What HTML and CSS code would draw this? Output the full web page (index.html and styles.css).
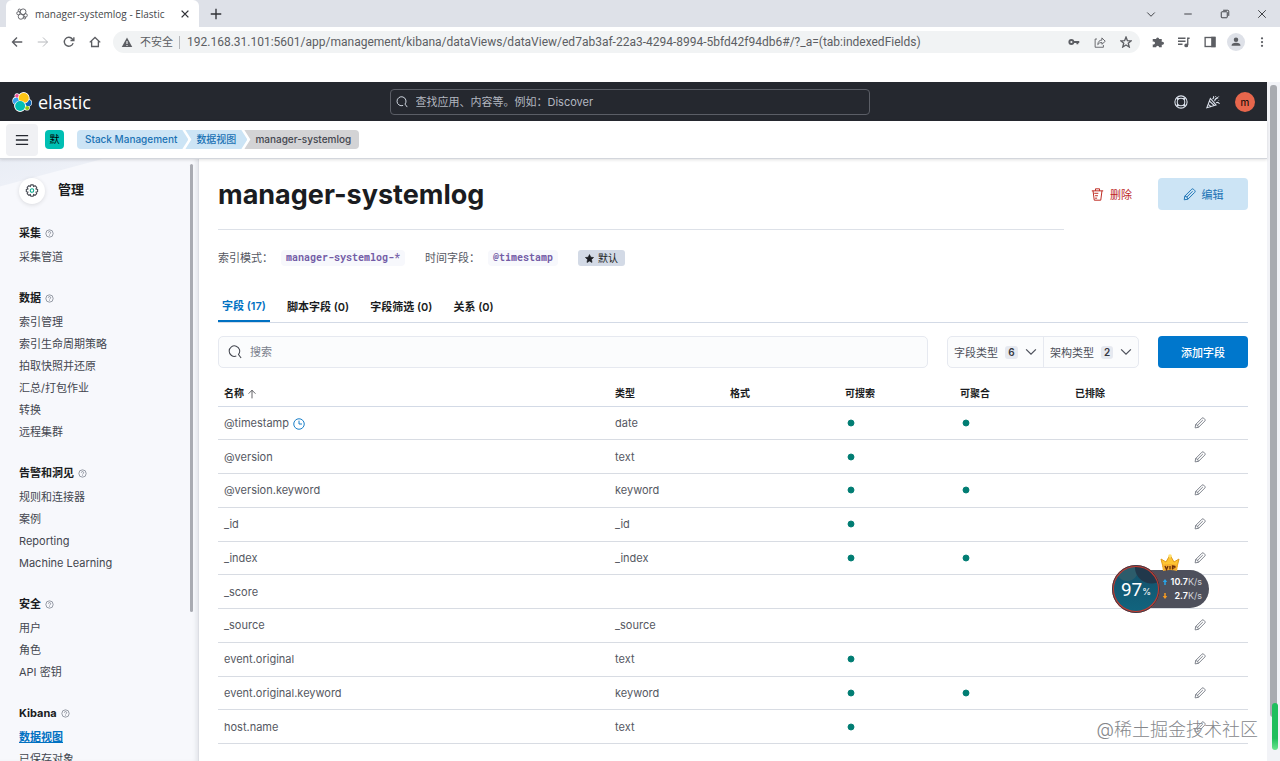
FILE: index.html
```html
<!DOCTYPE html>
<html lang="zh-CN">
<head>
    <meta charset="UTF-8">
    <meta name="viewport" content="width=device-width, initial-scale=1.0">
    <title>manager-systemlog - Elastic</title>
    <link rel="stylesheet" href="styles.css">
</head>
<body>
    <svg class="defs" aria-hidden="true">
        <symbol id="pencil" viewBox="0 0 16 16"><path d="M1.500 14.500l.7-4.500L10.600 1.600a1.700 1.700 0 0 1 2.400 0l1.400 1.400a1.700 1.700 0 0 1 0 2.400L6 13.800zM2.200 10Q5.500 10 6 13.800M4.600 11.200l7.200-7.200"/></symbol>
        <symbol id="search" viewBox="0 0 16 16"><path d="M9.500 12.600A6 6 0 1 1 12 10.800l3 4"/></symbol>
        <symbol id="chevron" viewBox="0 0 16 16"><path d="M1.500 4.500L8 11l6.500-6.500"/></symbol>
        <symbol id="help" viewBox="0 0 16 16"><circle cx="8" cy="8" r="6.500"/><path d="M6 6.500a2 2 0 1 1 2.500 2q-.5.2-.5 1M8 11v1.200"/></symbol>
        <symbol id="dot" viewBox="0 0 16 16"><circle cx="8" cy="8" r="4"/></symbol>
    </svg>

    <div class="tabstrip">
        <div class="tab">
            <svg class="icon" viewBox="0 0 16 16"><circle cx="9.500" cy="5" r="3.800"/><circle cx="6.500" cy="11.500" r="3.500"/><circle cx="3.200" cy="7" r="2.200"/><circle cx="12.800" cy="9.800" r="2.300"/><circle cx="4.500" cy="3" r="1.600"/><circle cx="11.500" cy="13.200" r="1.400"/></svg>
            <span class="tab-title">manager-systemlog - Elastic</span>
            <button class="plain" aria-label="关闭标签页"><svg class="icon dark bold" viewBox="0 0 16 16"><path d="M3.500 3.500l9 9M12.500 3.500l-9 9"/></svg></button>
        </div>
        <button class="plain new-tab" aria-label="新标签页"><svg class="icon dark bold" viewBox="0 0 16 16"><path d="M8 1v14M1 8h14"/></svg></button>
        <div class="window-buttons">
            <button class="plain" aria-label="搜索标签页"><svg class="icon dark" viewBox="0 0 16 16"><path d="M3 6l5 5 5-5"/></svg></button>
            <button class="plain" aria-label="最小化"><svg class="icon dark" viewBox="0 0 16 16"><path d="M3 8h10"/></svg></button>
            <button class="plain" aria-label="还原"><svg class="icon dark" viewBox="0 0 16 16"><rect x="3" y="5" width="8" height="8" rx="1"/><path d="M5.500 3h6q1.500 0 1.500 1.500v6"/></svg></button>
            <button class="plain" aria-label="关闭"><svg class="icon dark" viewBox="0 0 16 16"><path d="M3 3l10 10M13 3L3 13"/></svg></button>
        </div>
    </div>

    <div class="toolbar">
        <button class="plain" aria-label="后退"><svg class="icon bold" viewBox="0 0 16 16"><path d="M15 8H2M8 2L2 8l6 6"/></svg></button>
        <button class="plain" aria-label="前进"><svg class="icon faded" viewBox="0 0 16 16"><path d="M1 8h13M8 2l6 6-6 6"/></svg></button>
        <button class="plain" aria-label="重新加载"><svg class="icon bold" viewBox="0 0 16 16"><path d="M13.500 9.500A6 6 0 1 1 12.500 4l2 2M14.500 1.500V6H10"/></svg></button>
        <button class="plain" aria-label="主页"><svg class="icon bold" viewBox="0 0 16 16"><path d="M1 8.500L8 2l7 6.500M3.500 7v7h9V7"/></svg></button>
        <div class="address">
            <svg class="icon solid" viewBox="0 0 16 16"><path d="M8 2l7 12.500H1z"/><path class="cutout" d="M8 6.500v4M8 12v1.300"/></svg>
            <span class="insecure">不安全</span>
            <input class="url" type="text" aria-label="地址" value="192.168.31.101:5601/app/management/kibana/dataViews/dataView/ed7ab3af-22a3-4294-8994-5bfd42f94db6#/?_a=(tab:indexedFields)">
            <button class="plain" aria-label="密码"><svg class="icon bold" viewBox="0 0 16 16"><circle class="thick" cx="4.500" cy="8" r="2.700"/><path class="thick" d="M7.500 8H15M12.500 8v3"/></svg></button>
            <button class="plain" aria-label="分享"><svg class="icon" viewBox="0 0 16 16"><path d="M4 4H1.500v11h11v-3M5 11.500q.5-6 5.500-6V2.500L15 7l-4.500 4V8.500Q7 8.500 5 11.500z"/></svg></button>
            <button class="plain" aria-label="收藏"><svg class="icon bold" viewBox="0 0 16 16"><path d="M8 1.500l1.900 4.700 5 .3-3.900 3.200 1.300 4.900L8 11.900l-4.300 2.700L5 9.700 1.100 6.500l5-.3z"/></svg></button>
        </div>
        <button class="plain" aria-label="扩展程序"><svg class="icon solid" viewBox="0 0 16 16"><path d="M1 4h4.500a2 2 0 1 1 4 0H13v4a2 2 0 1 1 0 3.500V15H9.500a2 2 0 1 0-4 0H1v-4a2 2 0 1 0 0-3.500z"/></svg></button>
        <button class="plain" aria-label="媒体"><svg class="icon bold" viewBox="0 0 16 16"><path d="M0 3h10M0 7h10M0 11h6M15.500 3H13v9"/><circle class="fill" cx="11" cy="12.500" r="1.700"/></svg></button>
        <button class="plain" aria-label="侧边栏"><svg class="icon bold" viewBox="0 0 16 16"><rect x="1.500" y="2" width="13" height="12"/><path class="fill" d="M10.500 2h4v12h-4z"/></svg></button>
        <button class="plain profile" aria-label="个人资料"><svg class="icon solid" viewBox="0 0 16 16"><circle cx="8" cy="5" r="3"/><path d="M2 13q0-4 6-4t6 4z"/></svg></button>
        <button class="plain" aria-label="菜单"><svg class="icon solid" viewBox="0 0 16 16"><circle cx="8" cy="3" r="1.500"/><circle cx="8" cy="8" r="1.500"/><circle cx="8" cy="13" r="1.500"/></svg></button>
    </div>

    <div class="viewport">
        <div class="page">
            <header class="header">
                <a class="brand" href="#">
                    <svg class="logo" viewBox="0 0 32 32"><circle cx="18.500" cy="10" r="9.500" fill="#fff"/><circle cx="13" cy="22" r="9.500" fill="#fff"/><circle cx="7" cy="14" r="6.500" fill="#fff"/><circle cx="26" cy="17" r="6" fill="#fff"/><circle cx="8" cy="6" r="4" fill="#fff"/><circle cx="24" cy="25" r="4.500" fill="#fff"/><circle cx="8" cy="6" r="3" fill="#f04e98"/><circle cx="7" cy="14.500" r="5.500" fill="#36a2ef"/><circle cx="26" cy="17.500" r="5" fill="#0b64b4"/><circle cx="18.800" cy="9.500" r="9" fill="#fff"/><circle cx="18.800" cy="9.500" r="8" fill="#fec514"/><circle cx="13" cy="22.500" r="9" fill="#fff"/><circle cx="13" cy="22.500" r="8" fill="#00bfb3"/><circle cx="24.300" cy="25.500" r="3.300" fill="#93c90e"/></svg>
                    <span>elastic</span>
                </a>
                <label class="global-search">
                    <svg class="icon" aria-hidden="true"><use href="#search"/></svg>
                    <input type="search" aria-label="查找应用" placeholder="查找应用、内容等。例如：Discover">
                </label>
                <div class="header-actions">
                    <button class="plain" aria-label="帮助"><svg class="icon" viewBox="0 0 16 16"><circle cx="8" cy="8" r="7"/><circle cx="8" cy="8" r="4.300"/><path class="thick" d="M3.500 3.500L5 5M11 5l1.500-1.500M3.500 12.500L5 11M11 11l1.500 1.500"/></svg></button>
                    <button class="plain" aria-label="新闻"><svg class="icon" viewBox="0 0 16 16"><path d="M5 4L1 14.500l10.500-3zM4 7l5.500 5M2.500 10.500l3.500 3M7.500 4.500q2-1 1-3M10 7q0-3 4-4M11.500 9q2-1.500 4 1M11 1.200v.8M14.500 6v.7M14.500 1v.6"/></svg></button>
                    <button class="avatar" aria-label="用户">m</button>
                </div>
            </header>

            <div class="subheader">
                <button class="menu-button" aria-label="切换主导航"><svg class="icon menu-icon" viewBox="0 0 16 16"><path d="M1 3h14M1 8h14M1 13h14"/></svg></button>
                <button class="space">默</button>
                <nav class="breadcrumbs" aria-label="导航">
                    <a href="#">Stack Management</a>
                    <a href="#">数据视图</a>
                    <span>manager-systemlog</span>
                </nav>
            </div>

            <div class="body">
                <aside class="sidebar">
                    <div class="sidebar-content">
                        <div class="sidebar-title">
                            <span class="gear"><svg class="icon" viewBox="0 0 16 16"><path d="M6.700 1h2.600l.5 1.900 1.700-.9 1.900 1.900-.9 1.700 1.900.6v2.600l-1.900.5.9 1.700-1.900 1.900-1.700-.9-.5 1.900H6.700l-.6-1.900-1.700.9L2.500 11l.9-1.700-1.900-.5V6.200l1.900-.6-.9-1.700L4.400 2l1.700.9z"/><circle class="green" cx="8" cy="7.500" r="2"/></svg></span>
                            <h2>管理</h2>
                        </div>
                        <section>
                            <h3>采集 <svg class="icon"><use href="#help"/></svg></h3>
                            <a href="#">采集管道</a>
                        </section>
                        <section>
                            <h3>数据 <svg class="icon"><use href="#help"/></svg></h3>
                            <a href="#">索引管理</a>
                            <a href="#">索引生命周期策略</a>
                            <a href="#">拍取快照并还原</a>
                            <a href="#">汇总/打包作业</a>
                            <a href="#">转换</a>
                            <a href="#">远程集群</a>
                        </section>
                        <section>
                            <h3>告警和洞见 <svg class="icon"><use href="#help"/></svg></h3>
                            <a href="#">规则和连接器</a>
                            <a href="#">案例</a>
                            <a href="#">Reporting</a>
                            <a href="#">Machine Learning</a>
                        </section>
                        <section>
                            <h3>安全 <svg class="icon"><use href="#help"/></svg></h3>
                            <a href="#">用户</a>
                            <a href="#">角色</a>
                            <a href="#">API 密钥</a>
                        </section>
                        <section>
                            <h3>Kibana <svg class="icon"><use href="#help"/></svg></h3>
                            <a class="active" href="#">数据视图</a>
                            <a href="#">已保存对象</a>
                        </section>
                    </div>
                    <div class="sidebar-scroll"></div>
                </aside>

                <main class="content">
                    <div class="title-row">
                        <h1>manager-systemlog</h1>
                        <div class="title-actions">
                            <button class="delete"><svg class="icon" viewBox="0 0 16 16"><path d="M1 3.500h14M5.500 3.500V1h5v2.500M2.500 3.500L4 15h8l1.500-11.500M4 6.500h5M5 9.500h3.500M5 12.500h2.500"/></svg>删除</button>
                            <button class="edit"><svg class="icon"><use href="#pencil"/></svg>编辑</button>
                        </div>
                    </div>

                    <div class="meta">
                        <span>索引模式：</span><code>manager-systemlog-*</code>
                        <span>时间字段：</span><code>@timestamp</code>
                        <span class="badge"><svg class="icon" viewBox="0 0 16 16"><path d="M8 1l2.200 4.700 5 .6-3.700 3.500.9 5.200L8 12.500 3.600 15l.9-5.200L.8 6.300l5-.6z"/></svg>默认</span>
                    </div>

                    <div class="tabs" role="tablist">
                        <button class="selected" role="tab" aria-selected="true">字段 (17)</button>
                        <button role="tab">脚本字段 (0)</button>
                        <button role="tab">字段筛选 (0)</button>
                        <button role="tab">关系 (0)</button>
                    </div>

                    <div class="filters">
                        <label class="field-search">
                            <svg class="icon" aria-hidden="true"><use href="#search"/></svg>
                            <input type="search" aria-label="搜索" placeholder="搜索">
                        </label>
                        <div class="filter-group">
                            <button>字段类型 <span class="count">6</span><svg class="icon"><use href="#chevron"/></svg></button>
                            <button>架构类型 <span class="count">2</span><svg class="icon"><use href="#chevron"/></svg></button>
                        </div>
                        <button class="add">添加字段</button>
                    </div>

                    <table class="fields">
                        <thead>
                            <tr>
                                <th class="name">名称 <svg class="icon dark" viewBox="0 0 16 16"><path d="M8 15V2M2.500 7.500L8 2l5.500 5.500"/></svg></th>
                                <th>类型</th>
                                <th>格式</th>
                                <th>可搜索</th>
                                <th>可聚合</th>
                                <th>已排除</th>
                                <th class="action"></th>
                            </tr>
                        </thead>
                        <tbody>
                            <tr>
                                <td>@timestamp <svg class="icon clock" viewBox="0 0 16 16"><circle cx="8" cy="8" r="7"/><path d="M8 3.500V8h4"/></svg></td><td>date</td><td></td>
                                <td><svg class="icon yes"><use href="#dot"/></svg></td><td><svg class="icon yes"><use href="#dot"/></svg></td><td></td>
                                <td><button class="plain" aria-label="编辑"><svg class="icon"><use href="#pencil"/></svg></button></td>
                            </tr>
                            <tr>
                                <td>@version</td><td>text</td><td></td>
                                <td><svg class="icon yes"><use href="#dot"/></svg></td><td></td><td></td>
                                <td><button class="plain" aria-label="编辑"><svg class="icon"><use href="#pencil"/></svg></button></td>
                            </tr>
                            <tr>
                                <td>@version.keyword</td><td>keyword</td><td></td>
                                <td><svg class="icon yes"><use href="#dot"/></svg></td><td><svg class="icon yes"><use href="#dot"/></svg></td><td></td>
                                <td><button class="plain" aria-label="编辑"><svg class="icon"><use href="#pencil"/></svg></button></td>
                            </tr>
                            <tr>
                                <td>_id</td><td>_id</td><td></td>
                                <td><svg class="icon yes"><use href="#dot"/></svg></td><td></td><td></td>
                                <td><button class="plain" aria-label="编辑"><svg class="icon"><use href="#pencil"/></svg></button></td>
                            </tr>
                            <tr>
                                <td>_index</td><td>_index</td><td></td>
                                <td><svg class="icon yes"><use href="#dot"/></svg></td><td><svg class="icon yes"><use href="#dot"/></svg></td><td></td>
                                <td><button class="plain" aria-label="编辑"><svg class="icon"><use href="#pencil"/></svg></button></td>
                            </tr>
                            <tr>
                                <td>_score</td><td></td><td></td>
                                <td></td><td></td><td></td>
                                <td><button class="plain" aria-label="编辑"><svg class="icon"><use href="#pencil"/></svg></button></td>
                            </tr>
                            <tr>
                                <td>_source</td><td>_source</td><td></td>
                                <td></td><td></td><td></td>
                                <td><button class="plain" aria-label="编辑"><svg class="icon"><use href="#pencil"/></svg></button></td>
                            </tr>
                            <tr>
                                <td>event.original</td><td>text</td><td></td>
                                <td><svg class="icon yes"><use href="#dot"/></svg></td><td></td><td></td>
                                <td><button class="plain" aria-label="编辑"><svg class="icon"><use href="#pencil"/></svg></button></td>
                            </tr>
                            <tr>
                                <td>event.original.keyword</td><td>keyword</td><td></td>
                                <td><svg class="icon yes"><use href="#dot"/></svg></td><td><svg class="icon yes"><use href="#dot"/></svg></td><td></td>
                                <td><button class="plain" aria-label="编辑"><svg class="icon"><use href="#pencil"/></svg></button></td>
                            </tr>
                            <tr>
                                <td>host.name</td><td>text</td><td></td>
                                <td><svg class="icon yes"><use href="#dot"/></svg></td><td></td><td></td>
                                <td><button class="plain" aria-label="编辑"><svg class="icon"><use href="#pencil"/></svg></button></td>
                            </tr>
                        </tbody>
                    </table>
                </main>
            </div>
        </div>
        <div class="page-scroll"><div class="thumb"></div></div>
    </div>

    <div class="monitor">
        <svg class="crown" viewBox="0 0 20 18"><path d="M3 13L1 5l5 3 4-7 4 7 5-3-2 8z" fill="#ffc531" stroke="#e09a1c"/><circle cx="10" cy="2" r="1.800" fill="#ffe071"/><path d="M2 11q8-2 16 0l-1 6q-7-2-14 0z" fill="#f6ae2d"/><path d="M5 12l1.500 3.500L8 12M10 12v3.500M12.500 15.500V12q3 0 2.500 1.300-.5.900-2.500.700" fill="none" stroke="#6b2e0b" stroke-width="1.300"/></svg>
        <div class="usage"><span class="usage-value">97</span><span class="usage-unit">%</span></div>
        <div class="speed">
            <div><svg class="up" viewBox="0 0 8 8"><path d="M4 0l3 4H5v4H3V4H1z"/></svg><b>10.7</b>K/s</div>
            <div><svg class="down" viewBox="0 0 8 8"><path d="M4 8L1 4h2V0h2v4h2z"/></svg><b>2.7</b>K/s</div>
        </div>
    </div>
    <div class="watermark">@稀土掘金技术社区</div>
    <div class="side-marker"></div>
</body>
</html>
```
FILE: styles.css
```css
* {
    margin: 0;
    padding: 0;
    box-sizing: border-box;
}
body {
    height: 100vh;
    display: flex;
    flex-direction: column;
    overflow: hidden;
    position: relative;
    font-family: Inter, "Noto Sans CJK SC", sans-serif;
    font-size: 11px;
    color: #43464f;
    background: #fff;
}
button, input {
    font: inherit;
    color: inherit;
    border: none;
    background: none;
}
button {
    cursor: pointer;
}
input {
    outline: none;
    min-width: 0;
}
a {
    color: inherit;
    text-decoration: none;
}
.defs {
    display: none;
}
.icon {
    width: 12px;
    height: 12px;
    flex: none;
    fill: none;
    stroke: currentColor;
    stroke-width: 1.2;
}
.bold {
    stroke-width: 1.8;
}
.dark {
    color: #303236;
}
.faded {
    color: #aeb0b4;
}
.solid, .fill {
    fill: currentColor;
}
.solid {
    stroke: none;
}
.thick {
    stroke-width: 2.5;
}
.cutout {
    stroke: #f1f3f4;
    stroke-width: 1.5;
}
.plain {
    display: flex;
    align-items: center;
    justify-content: center;
}

/* browser frame */
.tabstrip {
    height: 27px;
    flex: none;
    display: flex;
    align-items: center;
    padding-left: 6px;
    background: #dee1e8;
}
.tab {
    width: 193px;
    height: 27px;
    display: flex;
    align-items: center;
    gap: 7px;
    padding: 0 8px 0 10px;
    background: #fff;
    border-radius: 6px 6px 0 0;
    color: #5c5e63;
}
.tab-title {
    flex: 1;
    font-family: "Open Sans", sans-serif;
    font-size: 10px;
    color: #45474b;
}
.new-tab {
    margin-left: 11px;
}
.window-buttons {
    display: flex;
    gap: 25px;
    margin-left: auto;
    padding-right: 12px;
}
.toolbar {
    height: 30px;
    flex: none;
    display: flex;
    align-items: center;
    gap: 14px;
    padding: 0 12px 0 11px;
    margin-bottom: 25px;
    color: #5c5e63;
}
.address {
    flex: 1;
    height: 22px;
    display: flex;
    align-items: center;
    gap: 14px;
    padding: 0 8px;
    margin: 0 -2px;
    border-radius: 11px;
    background: #f1f3f4;
}
.insecure {
    margin-left: -7px;
    padding-right: 6px;
    border-right: 1px solid #b5b7ba;
    line-height: 13px;
}
.url {
    flex: 1;
    margin-left: -7px;
    font-family: Roboto, sans-serif;
    font-size: 12px;
    color: #5c5e63;
}
.profile {
    width: 18px;
    height: 18px;
    margin: 0 -3px;
    border-radius: 50%;
    background: #dee1e8;
}

/* kibana header */
.viewport {
    flex: 1;
    min-height: 0;
    display: flex;
}
.page {
    flex: 1;
    min-width: 0;
    display: flex;
    flex-direction: column;
}
.page-scroll {
    width: 13px;
    padding: 3px 3px 44px;
    background: #f2f3f7;
}
.thumb {
    height: 100%;
    border-radius: 3px;
    background: #a9abb0;
}
.header {
    height: 39px;
    flex: none;
    display: grid;
    grid-template-columns: 1fr 480px 1fr;
    align-items: center;
    padding: 0 12px;
    background: #25282f;
    color: #dfe5ef;
}
.brand {
    display: flex;
    align-items: center;
    gap: 6px;
    font-family: "Open Sans", sans-serif;
    font-size: 18px;
    line-height: 20px;
    color: #fff;
}
.logo {
    width: 20px;
    height: 20px;
}
.global-search {
    height: 26px;
    display: flex;
    align-items: center;
    gap: 8px;
    padding: 0 5px;
    margin: 0 4px 0 -4px;
    border: 1px solid #5b5e66;
    border-radius: 4px;
}
.global-search input {
    flex: 1;
}
.global-search input::placeholder {
    color: #b3b7c0;
}
.header-actions {
    display: flex;
    justify-content: flex-end;
    align-items: center;
    gap: 18px;
}
.header-actions .icon {
    width: 14px;
    height: 14px;
}
.avatar {
    width: 20px;
    height: 20px;
    margin-left: -3px;
    border-radius: 50%;
    background: #e7664c;
    font-size: 10px;
    color: #000;
}
.subheader {
    height: 38px;
    flex: none;
    display: flex;
    align-items: center;
    padding-left: 6px;
    border-bottom: 1px solid #d3d6dc;
    box-shadow: 0 1px 3px rgba(0, 0, 0, 0.12);
    position: relative;
}
.menu-button {
    width: 32px;
    height: 32px;
    border-radius: 4px;
    background: #f0f1f4;
    display: flex;
    align-items: center;
    justify-content: center;
}
.menu-icon {
    width: 14px;
    height: 14px;
    stroke-width: 1.6;
    color: #25282f;
}
.space {
    width: 19px;
    height: 19px;
    margin: 0 13px 0 7px;
    border-radius: 4px;
    background: #00bfb3;
    font-size: 10px;
    line-height: 19px;
    color: #000;
}
.breadcrumbs {
    display: flex;
    font-size: 10px;
    font-weight: 500;
    line-height: 19px;
}
.breadcrumbs a {
    padding: 0 11px 0 8px;
    border-radius: 4px 0 0 4px;
    background: #cce4f5;
    color: #1a72b4;
    clip-path: polygon(0 0, calc(100% - 6px) 0, 100% 50%, calc(100% - 6px) 100%, 0 100%);
}
.breadcrumbs a + a {
    margin-left: -3px;
    padding-left: 11px;
    border-radius: 0;
    clip-path: polygon(0 0, calc(100% - 6px) 0, 100% 50%, calc(100% - 6px) 100%, 0 100%, 6px 50%);
}
.breadcrumbs span {
    margin-left: -3px;
    padding: 0 8px 0 11px;
    border-radius: 0 4px 4px 0;
    background: #d3d3d5;
    clip-path: polygon(0 0, 100% 0, 100% 100%, 0 100%, 6px 50%);
}

/* sidebar */
.body {
    flex: 1;
    min-height: 0;
    display: flex;
}
.sidebar {
    width: 199px;
    flex: none;
    display: flex;
    justify-content: space-between;
    padding: 5px 5px 0 19px;
    overflow: hidden;
    border-right: 1px solid #dcdee4;
    background: linear-gradient(165deg, #e9edf5 0, #edf0f7 26px, #f7f8fc 27px);
    box-shadow: inset -4px 0 4px -2px #e3e5ea;
}
.sidebar-scroll {
    width: 3px;
    height: 75%;
    border-radius: 2px;
    background: #a9abb2;
}
.sidebar-title {
    display: flex;
    gap: 13px;
    margin: 14px 0 18px;
}
.sidebar-title h2 {
    font-size: 13px;
    line-height: 22px;
    color: #1a1c21;
}
.gear {
    width: 26px;
    height: 26px;
    display: flex;
    align-items: center;
    justify-content: center;
    border-radius: 50%;
    background: #fff;
    box-shadow: 0 1px 4px rgba(0, 0, 0, 0.12);
}
.gear .icon {
    width: 14px;
    height: 14px;
}
.green {
    stroke: #00a68a;
}
.sidebar section {
    margin-bottom: 19px;
}
.sidebar h3 {
    display: flex;
    align-items: center;
    gap: 4px;
    margin-bottom: 2px;
    font-size: 11px;
    line-height: 22px;
    color: #1a1c21;
}
.sidebar h3 .icon {
    width: 9px;
    height: 9px;
    color: #69707d;
}
.sidebar section a {
    display: block;
    line-height: 22px;
}
.sidebar .active {
    font-weight: 700;
    color: #0071c2;
    text-decoration: underline;
}

/* data view */
.content {
    flex: 1;
    min-width: 0;
    padding: 19px 19px 0;
}
.title-row {
    display: flex;
}
.title-row h1 {
    flex: 1;
    height: 52px;
    border-bottom: 1px solid #dde1e8;
    font-size: 27px;
    line-height: 34px;
    color: #1a1c21;
}
.title-actions {
    display: flex;
    align-items: flex-start;
    gap: 16px;
    margin-left: 17px;
}
.title-actions button, .add {
    height: 32px;
    display: flex;
    align-items: center;
    justify-content: center;
    gap: 6px;
    border-radius: 4px;
}
.title-actions .icon {
    width: 13px;
    height: 13px;
}
.title-actions .delete {
    padding: 0 10px;
    color: #bd271e;
}
.title-actions .edit, .add {
    width: 90px;
}
.title-actions .edit {
    background: #cce4f5;
    color: #1a72b4;
}
.meta {
    display: flex;
    align-items: center;
    margin-top: 19px;
    line-height: 18px;
    color: #555862;
}
.meta code {
    margin: 0 20px 0 8px;
    padding: 0 5px;
    border-radius: 4px;
    background: #f7f8fc;
    font-family: "Roboto Mono", "Liberation Mono", monospace;
    font-size: 10px;
    font-weight: 700;
    line-height: 16px;
    color: #735ca6;
}
.badge {
    display: flex;
    align-items: center;
    gap: 4px;
    padding: 0 7px;
    border-radius: 3px;
    background: #d3dae6;
    font-size: 10px;
    line-height: 16px;
    color: #1a1c21;
}
.badge .icon {
    width: 9px;
    height: 9px;
    fill: currentColor;
}
.tabs {
    display: flex;
    gap: 13px;
    margin-top: 23px;
    border-bottom: 1px solid #d3dae6;
}
.tabs button {
    height: 32px;
    padding: 0 4px;
    font-weight: 600;
    color: #1a1c21;
}
.tabs .selected {
    margin-bottom: -1px;
    border-bottom: 2px solid #0071c2;
    color: #0071c2;
}
.filters {
    display: flex;
    gap: 19px;
    margin-top: 13px;
}
.field-search {
    flex: 1;
    height: 32px;
    display: flex;
    align-items: center;
    gap: 8px;
    padding: 0 9px;
    border: 1px solid #e6e9f0;
    border-radius: 5px;
    background: #fbfcfd;
}
.field-search .icon {
    width: 14px;
    height: 14px;
}
.field-search input {
    flex: 1;
}
.field-search input::placeholder {
    color: #7a808c;
}
.filter-group {
    display: flex;
    border: 1px solid #e6e9f0;
    border-radius: 5px;
    background: #fbfcfd;
    color: #4d505a;
}
.filter-group button {
    width: 95px;
    display: flex;
    align-items: center;
    justify-content: space-between;
    padding: 0 6px;
}
.filter-group button + button {
    border-left: 1px solid #e6e9f0;
}
.filter-group .icon {
    stroke-width: 1.6;
}
.count {
    padding: 0 3px;
    border-radius: 3px;
    background: #e6e9f0;
    font-size: 10px;
    font-weight: 600;
    line-height: 13px;
    color: #343741;
}
.add {
    background: #0077cc;
    color: #fff;
    font-weight: 500;
}
.fields {
    width: 100%;
    height: 365px;
    margin-top: 11px;
    table-layout: fixed;
    border-collapse: collapse;
    text-align: left;
    color: #555862;
}
.fields th {
    width: 115px;
    height: 27px;
    padding: 0 6px;
    border-bottom: 1px solid #d3dae6;
    font-size: 10px;
    font-weight: 600;
    color: #1a1c21;
}
.fields .name {
    width: auto;
}
.fields .action {
    width: 64px;
}
.fields td {
    padding: 0 6px;
    border-bottom: 1px solid #d8dce3;
}
.fields .icon {
    vertical-align: middle;
}
.fields th .icon {
    width: 10px;
    height: 10px;
}
.fields button {
    width: 20px;
    color: #747882;
}
.fields .clock {
    margin-left: 1px;
    color: #0071c2;
}
.fields .yes {
    display: block;
    fill: #017d73;
    stroke: #017d73;
}

/* overlays */
.monitor {
    position: absolute;
    right: 71px;
    bottom: 148px;
    display: flex;
    align-items: center;
}
.crown {
    position: absolute;
    top: -11px;
    left: 48px;
    width: 20px;
    height: 18px;
}
.usage {
    width: 48px;
    height: 48px;
    display: flex;
    align-items: center;
    justify-content: center;
    border: 2px solid #c83a2e;
    border-radius: 50%;
    outline: 1px solid #3b3d4a;
    outline-offset: -1px;
    background:
        radial-gradient(circle at 85% 0, #21384b 16px, transparent 17px),
        radial-gradient(circle at 30% 8%, #2c5c6b 10px, transparent 11px),
        linear-gradient(#14506a, #11647e);
    color: #fff;
    position: relative;
}
.usage-value {
    font-family: Roboto, sans-serif;
    font-size: 19px;
}
.usage-unit {
    font-size: 9px;
    margin-top: 5px;
}
.speed {
    width: 63px;
    margin-left: -14px;
    padding: 5px 7px 5px 16px;
    border-radius: 0 19px 19px 0;
    background: #4e505c;
    font-size: 9px;
    line-height: 14px;
    color: #d0d2d8;
}
.speed div {
    display: flex;
    align-items: center;
}
.speed svg {
    width: 6px;
    height: 8px;
    margin-right: auto;
}
.speed b {
    font-weight: 600;
    color: #fff;
}
.up {
    fill: #28a5e8;
}
.down {
    fill: #f59b23;
}
.watermark {
    position: absolute;
    right: 22px;
    bottom: 18px;
    font-size: 18px;
    font-weight: 300;
    line-height: 26px;
    color: #85878b;
    text-shadow: 0 0 2px #fff;
}
.side-marker {
    position: absolute;
    right: 2px;
    bottom: 11px;
    width: 6px;
    height: 47px;
    border-radius: 3px;
    background: linear-gradient(#20bf5d 75%, #6be58f);
}
```
